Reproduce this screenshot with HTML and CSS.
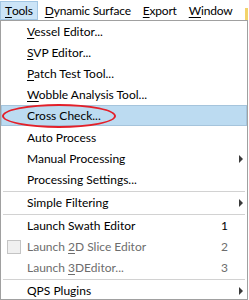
FILE: index.html
```html
<!DOCTYPE html>
<html lang="en">
<head>
    <meta charset="UTF-8">
    <title>Tools Menu</title>
    <link rel="stylesheet" href="styles.css">
</head>
<body>
    <div class="menubar">
        <span class="mb-item active"><u>T</u>ools</span>
        <span class="mb-item"><u>D</u>ynamic Surface</span>
        <span class="mb-item"><u>E</u>xport</span>
        <span class="mb-item"><u>W</u>indow</span>
        <span class="mb-peek"></span>
    </div>

    <div class="menu">
        <div class="item"><span class="label"><u>V</u>essel Editor...</span></div>
        <div class="item"><span class="label"><u>S</u>VP Editor...</span></div>
        <div class="item"><span class="label"><u>P</u>atch Test Tool...</span></div>
        <div class="item"><span class="label"><u>W</u>obble Analysis Tool...</span></div>
        <div class="item hover">
            <span class="label">Cross Check...</span>
            <span class="circle"></span>
        </div>
        <div class="item"><span class="label">Auto Process</span></div>
        <div class="item"><span class="label">Manual Processing</span><span class="arrow"></span></div>
        <div class="item"><span class="label">Processing Settings...</span></div>
        <div class="sep"></div>
        <div class="item"><span class="label">Simple Filtering</span><span class="arrow"></span></div>
        <div class="sep"></div>
        <div class="item"><span class="label">Launch Swath Editor</span><span class="key">1</span></div>
        <div class="item disabled"><span class="check"></span><span class="label">Launch <u>2</u>D Slice Editor</span><span class="key">2</span></div>
        <div class="item disabled"><span class="label">Launch <u>3</u>DEditor...</span><span class="key">3</span></div>
        <div class="sep"></div>
        <div class="item"><span class="label">QPS Plugins</span><span class="arrow"></span></div>
    </div>
</body>
</html>
```

FILE: styles.css
```css
body { margin: 0; width: 249px; height: 300px; overflow: hidden; background: #ffffff; font-family: Lato, "Noto Sans", sans-serif; font-size: 12px; color: #000; }
u { text-decoration-thickness: 1px; text-underline-offset: 2px; }

.menubar { display: flex; align-items: center; height: 20px; background: #ffffff; position: relative; overflow: hidden; letter-spacing: -0.2px; }
.mb-item { display: flex; align-items: center; height: 19px; box-sizing: border-box; padding: 0 4px; margin-right: 1px; border: 1px solid transparent; white-space: nowrap; }
.mb-item + .mb-item { padding-left: 5px; }
.mb-item.active { background: #cce4f7; border-color: #a3c6e3; }
.mb-peek { position: absolute; left: 245px; top: 8px; width: 3px; height: 12px; background: #f3d36a; }

.menu { position: relative; width: 248px; height: 280px; box-sizing: border-box; border: 1px solid #a0a0a0; background: #ffffff; }
.item { position: relative; display: flex; align-items: center; height: 21px; padding-left: 25px; padding-right: 3px; box-sizing: border-box; border: 1px solid transparent; white-space: nowrap; }
.item .label { flex: 1; }
.item.hover { background: #bcdbf1; border-color: #a5c4dc; margin-bottom: 1px; }
.item.disabled { color: #6d6d6d; }
.key { width: 12px; margin-right: 10px; }
.arrow { width: 0; height: 0; border-left: 4px solid #3a3a3a; border-top: 4px solid transparent; border-bottom: 4px solid transparent; }
.check { position: absolute; left: 5px; top: 3px; width: 12px; height: 12px; border: 1px solid #c4c4c4; background: #f0f0f0; }
.sep { height: 1px; margin: 1px 2px 0; background: #d2d2d2; }

.circle { position: absolute; left: 0; top: -2px; width: 114px; height: 24px; border: 2px solid #e3202a; border-radius: 50%; box-sizing: border-box; }
```
